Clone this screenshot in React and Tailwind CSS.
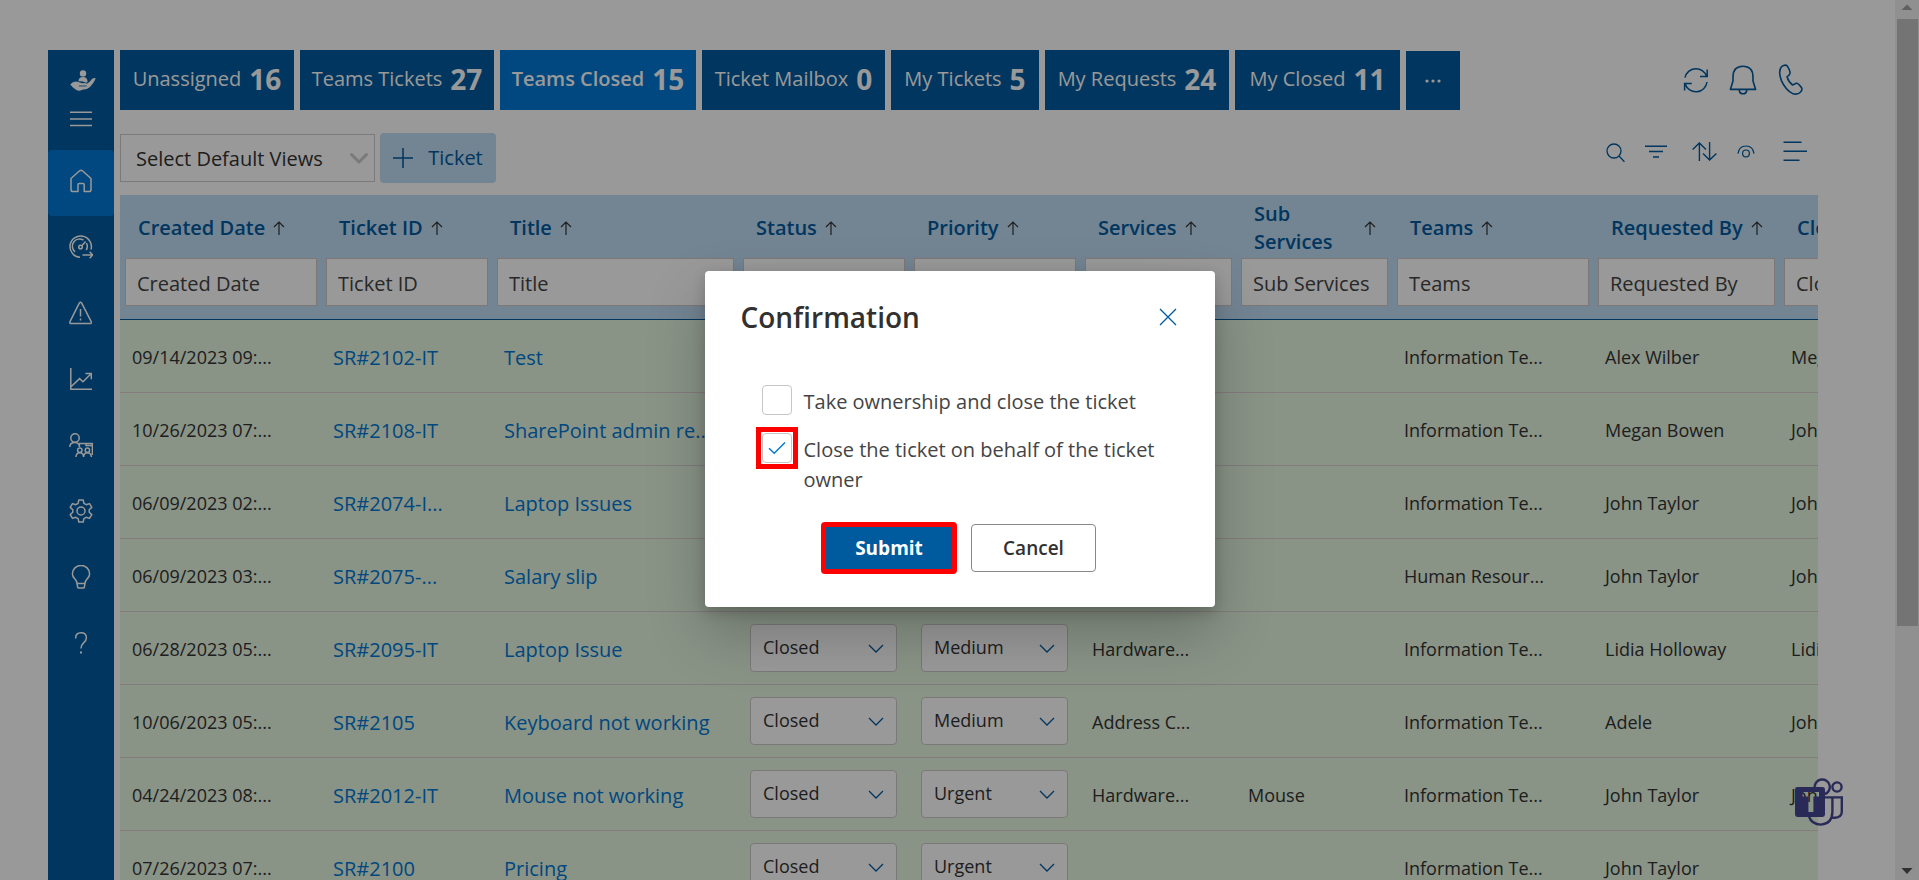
import React from "react";

const TABS = [
  { label: "Unassigned", count: 16, width: "w-[174px]" },
  { label: "Teams Tickets", count: 27, width: "w-[194px]" },
  { label: "Teams Closed", count: 15, width: "w-[196px]", active: true },
  { label: "Ticket Mailbox", count: 0, width: "w-[183px]" },
  { label: "My Tickets", count: 5, width: "w-[148px]" },
  { label: "My Requests", count: 24, width: "w-[184px]" },
  { label: "My Closed", count: 11, width: "w-[165px]" },
];

const COLUMNS = [
  { name: "Created Date", width: "w-[201px]" },
  { name: "Ticket ID", width: "w-[171px]" },
  { name: "Title", width: "w-[246px]" },
  { name: "Status", width: "w-[171px]" },
  { name: "Priority", width: "w-[171px]" },
  { name: "Services", width: "w-[156px]" },
  { name: "Sub Services", width: "w-[156px]" },
  { name: "Teams", width: "w-[201px]" },
  { name: "Requested By", width: "w-[186px]" },
  { name: "Closed By", width: "w-[186px]" },
];

const ROWS = [
  ["09/14/2023 09:...", "SR#2102-IT", "Test", "Medium", "", "", "Information Te...", "Alex Wilber", "Megan Bowen"],
  ["10/26/2023 07:...", "SR#2108-IT", "SharePoint admin re...", "Medium", "", "", "Information Te...", "Megan Bowen", "John Taylor"],
  ["06/09/2023 02:...", "SR#2074-I...", "Laptop Issues", "Medium", "", "", "Information Te...", "John Taylor", "John Taylor"],
  ["06/09/2023 03:...", "SR#2075-...", "Salary slip", "Medium", "", "", "Human Resour...", "John Taylor", "John Taylor"],
  ["06/28/2023 05:...", "SR#2095-IT", "Laptop Issue", "Medium", "Hardware...", "", "Information Te...", "Lidia Holloway", "Lidia Holloway"],
  ["10/06/2023 05:...", "SR#2105", "Keyboard not working", "Medium", "Address C...", "", "Information Te...", "Adele", "John Taylor"],
  ["04/24/2023 08:...", "SR#2012-IT", "Mouse not working", "Urgent", "Hardware...", "Mouse", "Information Te...", "John Taylor", "John Taylor"],
  ["07/26/2023 07:...", "SR#2100", "Pricing", "Urgent", "", "", "Information Te...", "John Taylor", ""],
];

function Svg({ w = 24, h = 24, sw = 1.5, className = "", children }) {
  return (
    <svg
      width={w}
      height={h}
      viewBox={`0 0 ${w} ${h}`}
      fill="none"
      stroke="currentColor"
      strokeWidth={sw}
      className={`shrink-0 ${className}`}
      aria-hidden="true"
    >
      {children}
    </svg>
  );
}

const NAV = [
  {
    label: "Home",
    active: true,
    icon: (
      <Svg>
        <path d="M2 9.5 L10.6 1.8 Q12 0.8 13.4 1.8 L22 9.5 V20.5 Q22 22.6 20 22.6 H15.2 V15.6 Q15.2 14.4 14 14.4 H10.2 Q9 14.4 9 15.6 V22.6 H4 Q2 22.6 2 20.5 Z" strokeLinejoin="round" />
      </Svg>
    ),
  },
  {
    label: "Dashboard",
    icon: (
      <Svg>
        <path d="M11 22.3 A10.7 10.7 0 1 1 22 14.5" />
        <path d="M6 16.8 A7.2 7.2 0 0 1 14.5 5.2 M17.4 8 A7.2 7.2 0 0 1 17.2 15.2" />
        <circle cx="11.5" cy="12" r="1.8" />
        <path d="M12.8 10.7 L16.6 6.6 M13.5 20 H23.5 M20.6 16.8 L23.8 20 L20.6 23.2" />
      </Svg>
    ),
  },
  {
    label: "Alerts",
    icon: (
      <Svg>
        <path d="M10.3 2.2 Q11.5 0.4 12.7 2.2 L22.2 20.6 Q22.8 22.6 21 22.6 H2 Q0.4 22.6 1 20.6 Z" strokeLinejoin="round" />
        <path d="M11.5 8 V15.6 M11.5 17.6 V19.4" />
      </Svg>
    ),
  },
  {
    label: "Reports",
    icon: (
      <Svg>
        <path d="M1.8 1 V22.2 H23 M2 19.8 L10.6 11.6 L14 14.8 L22 6.8 M16.4 6.4 H22.3 V12.2" />
      </Svg>
    ),
  },
  {
    label: "Teams",
    icon: (
      <Svg>
        <circle cx="6" cy="5" r="4.2" />
        <path d="M0.8 14 Q0.8 9.4 6 9.4 Q9.4 9.4 10.4 12.4" />
        <path d="M10.4 14 V10.6 H23.4 V21.2 H22.4 M17 10.6 V12.6 H23.4" />
        <circle cx="10.8" cy="17.2" r="2.2" />
        <circle cx="18.4" cy="17.2" r="2.2" />
        <path d="M7 24 Q7.2 19.8 10.8 19.8 Q14.4 19.8 14.6 24 Q14.8 19.8 18.4 19.8 Q22 19.8 22.4 24" />
      </Svg>
    ),
  },
  {
    label: "Settings",
    icon: (
      <Svg>
        <path d="M9.8 1 H14.2 L14.9 4.4 L17.2 5.7 L20.5 4.6 L22.8 8.4 L20.2 10.7 V13.3 L22.8 15.6 L20.5 19.4 L17.2 18.3 L14.9 19.6 L14.2 23 H9.8 L9.1 19.6 L6.8 18.3 L3.5 19.4 L1.2 15.6 L3.8 13.3 V10.7 L1.2 8.4 L3.5 4.6 L6.8 5.7 L9.1 4.4 Z" strokeLinejoin="round" />
        <circle cx="12" cy="12" r="4" />
      </Svg>
    ),
  },
  {
    label: "Ideas",
    icon: (
      <Svg>
        <path d="M8 18.4 Q7.8 16 5.6 13.6 Q3.4 11.4 3.4 8.8 A8.6 8.4 0 0 1 20.6 8.8 Q20.6 11.4 18.4 13.6 Q16.2 16 16 18.4 L15.4 22 Q15.2 23 14.2 23 H9.8 Q8.8 23 8.6 22 Z M8 18.4 H16" strokeLinejoin="round" />
      </Svg>
    ),
  },
  {
    label: "Help",
    icon: (
      <Svg>
        <path d="M6.6 7.4 Q6.6 1.8 12 1.8 Q17.4 1.8 17.4 6.8 Q17.4 9.4 14.8 11.6 Q12 14 12 17.6" />
        <path d="M12 20.4 V22.4" strokeWidth="2" />
      </Svg>
    ),
  },
];

function Sidebar() {
  return (
    <nav aria-label="Main" className="flex w-[66px] shrink-0 flex-col bg-[#005a9e] text-white">
      <div className="flex h-[100px] flex-col items-center gap-[19px] pt-5">
        <svg width="26" height="22" viewBox="0 0 26 22" fill="currentColor" className="ml-1 shrink-0" aria-hidden="true">
          <circle cx="13" cy="3.4" r="3.2" />
          <path d="M8.4 11.4 Q8.6 7 13 7 Q17.2 7 17.6 11.4 Q17 13 15.4 12.6 Q12.4 11 8.4 11.4 Z" />
          <path d="M0.2 14.6 Q3.6 10.4 8.2 12 L12.4 13.2 Q15.4 12.8 16.8 13.8 Q19.4 12.6 22 9 Q24 7.2 25.8 8.6 Q23.8 13 20 17 Q17.4 19.6 12.4 19.8 Q9 21.6 6.4 20 L3.2 17.8 Z" />
          <path d="M9 16 H16.6" stroke="#005a9e" strokeWidth="0.8" fill="none" />
        </svg>
        <button aria-label="Toggle menu" className="flex">
          <Svg w={22} h={16}>
            <path d="M0 1.2 H22 M0 8 H22 M0 14.6 H22" />
          </Svg>
        </button>
      </div>
      {NAV.map((item) => (
        <a
          key={item.label}
          href="#"
          aria-label={item.label}
          className={`flex h-[66px] shrink-0 items-center justify-center pb-1 ${item.active ? "rounded bg-[#0078d4]" : ""}`}
        >
          {item.icon}
        </a>
      ))}
    </nav>
  );
}

function TopBar() {
  return (
    <header className="flex items-center justify-between">
      <div className="flex h-[60px] gap-1.5 text-white">
        {TABS.map((tab) => (
          <button
            key={tab.label}
            className={`flex items-center justify-center gap-2 pb-0.5 whitespace-nowrap ${tab.width} ${
              tab.active ? "bg-[#0078d4] font-semibold" : "bg-[#005a9e]"
            }`}
          >
            <span className="text-[20px]">{tab.label}</span>
            <span className="text-[28px] font-bold">{tab.count}</span>
          </button>
        ))}
        <button aria-label="More" className="mt-px flex w-[54px] items-center justify-center bg-[#005a9e]">
          <svg width="16" height="4" viewBox="0 0 16 4" fill="currentColor" aria-hidden="true">
            <circle cx="2" cy="2" r="1.6" />
            <circle cx="8" cy="2" r="1.6" />
            <circle cx="14" cy="2" r="1.6" />
          </svg>
        </button>
      </div>
      <div className="flex items-center gap-5 pr-[13px] text-[#005a9e]">
        <button aria-label="Refresh">
          <Svg w={26} h={26} sw={1.5}>
            <path d="M2 10.6 A11.2 11.2 0 0 1 23.6 9.4 M24.2 2.4 V9.6 H17 M24 15 A11.2 11.2 0 0 1 2.2 17 M1.6 23.4 V16.6 H8.8" />
          </Svg>
        </button>
        <button aria-label="Notifications">
          <Svg w={28} h={30} sw={1.6}>
            <path d="M4 12 Q4 1.2 14 1.2 Q24 1.2 24 12 V16 L26.6 24.4 H1.4 L4 16 Z" strokeLinejoin="round" />
            <path d="M10.2 24.6 Q10.4 28.8 14 28.8 Q17.6 28.8 17.8 24.6" />
          </Svg>
        </button>
        <button aria-label="Call">
          <Svg w={28} h={32} sw={1.6}>
            <path d="M4.6 2.6 Q8 0.2 10.2 1.8 Q13.4 7 13 9.4 Q12.4 11.2 10 12.8 Q11.4 17.8 15.6 21 Q17.2 20.6 19.2 19.2 Q21.4 19 24.6 23.8 Q25.6 25.6 23.6 28 Q20.4 31.4 15.4 29.4 Q8.6 26 4.4 16.6 Q0.8 7.2 4.6 2.6 Z" strokeLinejoin="round" />
          </Svg>
        </button>
      </div>
    </header>
  );
}

function Toolbar() {
  return (
    <div className="mt-[23px] flex h-[50px] items-center justify-between">
      <div className="flex items-center gap-[5px]">
        <div className="relative h-12 w-[255px]">
          <select
            aria-label="Default view"
            className="h-12 w-full appearance-none border border-[#cccccc] bg-white pt-0.5 pl-[15px] text-[20px] text-[#333333]"
          >
            <option>Select Default Views</option>
          </select>
          <Svg w={18} h={12} sw={3} className="pointer-events-none absolute top-[19px] right-[7px] text-[#cccccc]">
            <path d="M1.6 1.6 L9 9 L16.4 1.6" strokeLinecap="round" strokeLinejoin="round" />
          </Svg>
        </div>
        <button className="flex h-[50px] w-[116px] items-center justify-center gap-[15px] rounded-sm bg-[#c0dcf3] text-[20px] text-[#005a9e]">
          <Svg w={20} h={20}>
            <path d="M10 0 V20 M0 10 H20" />
          </Svg>
          Ticket
        </button>
      </div>
      <div className="flex items-center pr-[11px] pb-3.5 text-[#005a9e]">
        <button aria-label="Search" className="mt-1 mr-5">
          <Svg w={19} h={20} sw={1.3}>
            <circle cx="8" cy="8" r="7" />
            <path d="M13 13 L18.4 18.8" />
          </Svg>
        </button>
        <button aria-label="Filter" className="mr-[25px]">
          <Svg w={22} h={13}>
            <path d="M0 1.2 H22 M4 6.6 H18 M8 12 H14" />
          </Svg>
        </button>
        <button aria-label="Sort" className="mr-5">
          <Svg w={25} h={19} sw={1.4}>
            <path d="M7.4 19 V1 M0.6 7.6 L7.4 1 L14 7.6 M17.6 0 V18 M11 11.4 L17.6 18 L24.4 11.4" />
          </Svg>
        </button>
        <button aria-label="Preview" className="mr-7">
          <Svg w={18} h={13} sw={1.2}>
            <path d="M1 8.6 Q2 1 9 1 Q16 1 17 8.6" />
            <circle cx="9" cy="8.4" r="3.4" />
          </Svg>
        </button>
        <button aria-label="Group">
          <Svg w={24} h={20}>
            <path d="M0.5 1.2 H18.5 M0.5 10.2 H24 M0.5 19.2 H16.5" />
          </Svg>
        </button>
      </div>
    </div>
  );
}

function CellSelect({ label, value }) {
  return (
    <div className="relative h-12">
      <select
        aria-label={label}
        className="h-12 w-full appearance-none rounded-sm border border-[#d0c8c8] bg-white pl-3 text-[18px] text-[#333333]"
      >
        <option>{value}</option>
      </select>
      <Svg w={16} h={10} sw={1.3} className="pointer-events-none absolute top-5 right-[13px] text-[#005a9e]">
        <path d="M1 1 L8 8 L15 1" />
      </Svg>
    </div>
  );
}

function TextCell({ className = "", children }) {
  return <td className={`pt-1 pl-3 ${className}`}>{children}</td>;
}

function TicketTable() {
  return (
    <div className="mt-3 overflow-hidden">
      <table className="w-[1845px] table-fixed border-collapse text-left">
        <thead>
          <tr className="h-[124px] border-b border-[#005a9e] bg-[#c0dcf3] align-top">
            {COLUMNS.map((col) => (
              <th key={col.name} scope="col" className={`${col.width} pr-1 pl-[5px] font-semibold`}>
                <div className="flex h-[63px] items-end">
                  <button className="flex h-[60px] items-center gap-2 pl-[13px] text-left text-[20px] leading-7 text-[#005a9e]">
                    <span className={col.name === "Sub Services" ? "w-[102px]" : "whitespace-nowrap"}>{col.name}</span>
                    <Svg w={12} h={14} sw={1.2} className="text-[#333333]">
                      <path d="M6 14 V1 M1 6 L6 1 L11 6" />
                    </Svg>
                  </button>
                </div>
                <input
                  type="text"
                  aria-label={`Filter by ${col.name}`}
                  placeholder={col.name}
                  className="h-12 w-full border border-[#d0c8c4] bg-white pt-0.5 pl-[11px] text-[20px] font-normal placeholder:text-[#444444]"
                />
              </th>
            ))}
          </tr>
        </thead>
        <tbody>
          {ROWS.map(([date, id, title, priority, service, sub, team, requester, closer]) => (
            <tr
              key={id}
              className="h-[73px] border-b border-[#dccfcf] bg-[#e4f5e0] text-[18px] whitespace-nowrap text-[#333333]"
            >
              <TextCell>{date}</TextCell>
              <TextCell className="text-[20px]">
                <a href="#" className="text-[#0078d4]">{id}</a>
              </TextCell>
              <TextCell className="text-[20px]">
                <a href="#" className="text-[#0078d4]">{title}</a>
              </TextCell>
              <td className="px-3">
                <CellSelect label={`Status of ${id}`} value="Closed" />
              </td>
              <td className="px-3">
                <CellSelect label={`Priority of ${id}`} value={priority} />
              </td>
              <TextCell>{service}</TextCell>
              <TextCell>{sub}</TextCell>
              <TextCell>{team}</TextCell>
              <TextCell>{requester}</TextCell>
              <TextCell>{closer}</TextCell>
            </tr>
          ))}
        </tbody>
      </table>
    </div>
  );
}

function TeamsBadge() {
  return (
    <a href="#" aria-label="Open Microsoft Teams" className="absolute right-[76px] bottom-[54px] text-[#464794]">
      <svg width="48" height="48" viewBox="0 0 48 48" fill="none" stroke="currentColor" strokeWidth="2.4" aria-hidden="true">
        <path d="M19.6 9.4 A7.6 7.6 0 1 1 29.8 16.2" />
        <circle cx="42" cy="9" r="4.6" />
        <path d="M30 19.4 H46.8 V34 Q46.4 39.4 40 39.8 H37.4 M37.4 19.6 V34 Q37 45.8 26 46.6 Q16.4 46.4 14 38.4" />
        <path
          d="M2.4 9 H27.6 Q30 9 30 11.4 V36.6 Q30 39 27.6 39 H2.4 Q0 39 0 36.6 V11.4 Q0 9 2.4 9 Z M7.6 14 V18.6 H13.4 V34 H18.4 V18.6 H24 V14 Z"
          fill="currentColor"
          stroke="none"
          fillRule="evenodd"
        />
      </svg>
    </a>
  );
}

function ScrollRail() {
  return (
    <div className="flex h-full w-[24px] shrink-0 flex-col items-center bg-[#f1f1f1]" aria-hidden="true">
      <svg width="24" height="19" viewBox="0 0 24 19" className="shrink-0">
        <path d="M6.5 10 L12 4.5 L17.5 10 Z" fill="#a0a0a0" />
      </svg>
      <div className="h-[69%] w-[21px] bg-[#c1c1c1]" />
      <svg width="24" height="19" viewBox="0 0 24 19" className="mt-auto shrink-0">
        <path d="M6.5 7 L12 13 L17.5 7 Z" fill="#505050" />
      </svg>
    </div>
  );
}

function Option({ id, checked, marked, children }) {
  return (
    <div className="flex gap-3">
      <div
        className={`relative h-[30px] w-[30px] shrink-0 ${
          marked ? "outline-[5px] outline-offset-1 outline-[#ff0000]" : ""
        }`}
      >
        <input
          id={id}
          type="checkbox"
          defaultChecked={checked}
          className="block h-[30px] w-[30px] appearance-none rounded-sm border border-[#c8c6c4] bg-white"
        />
        {checked && (
          <Svg w={18} h={14} sw={1.4} className="pointer-events-none absolute top-2 left-1.5 text-[#0078d4]">
            <path d="M1 7.2 L6.2 12.2 L17 1.4" />
          </Svg>
        )}
      </div>
      <label htmlFor={id} className="pt-0.5 text-[20px] leading-[30px] text-[#444444]">
        {children}
      </label>
    </div>
  );
}

function ConfirmationDialog() {
  return (
    <div
      role="dialog"
      aria-modal="true"
      aria-labelledby="dialog-title"
      className="w-[510px] rounded-sm bg-white px-9 pb-[33px] shadow-[0_26px_58px_0_rgba(0,0,0,0.22),0_5px_14px_0_rgba(0,0,0,0.18)]"
    >
      <div className="flex h-[92px] items-center justify-between">
        <h2 id="dialog-title" className="text-[28px] font-semibold text-[#323130]">
          Confirmation
        </h2>
        <button aria-label="Close" className="mr-0.5 text-[#005a9e]">
          <Svg w={18} h={18} sw={1.3}>
            <path d="M1 1 L17 17 M17 1 L1 17" />
          </Svg>
        </button>
      </div>
      <div className="flex flex-col gap-4 pt-[22px] pl-[21px]">
        <Option id="take-ownership">Take ownership and close the ticket</Option>
        <Option id="on-behalf" checked marked>
          Close the ticket on behalf of the ticket owner
        </Option>
      </div>
      <div className="mt-[27px] flex items-center justify-center gap-3.5 pr-0.5">
        <button className="h-[52px] w-[136px] rounded-sm border-[5px] border-[#ff0000] bg-[#005a9e] text-[19px] font-bold text-white">
          Submit
        </button>
        <button className="h-12 w-[125px] rounded-sm border border-[#8a8886] bg-white text-[19px] font-semibold text-[#323130]">
          Cancel
        </button>
      </div>
    </div>
  );
}

export default function App() {
  return (
    <div className="relative flex h-screen overflow-hidden bg-white font-['Open_Sans','Noto_Sans',sans-serif]">
      <div className="flex min-w-0 flex-1 gap-1.5 pt-[50px] pr-[77px] pl-12">
        <Sidebar />
        <main className="flex min-w-0 flex-1 flex-col">
          <TopBar />
          <Toolbar />
          <TicketTable />
        </main>
      </div>
      <ScrollRail />
      <TeamsBadge />
      <div className="absolute inset-0 flex items-center justify-center bg-black/40 pb-0.5">
        <ConfirmationDialog />
      </div>
    </div>
  );
}
